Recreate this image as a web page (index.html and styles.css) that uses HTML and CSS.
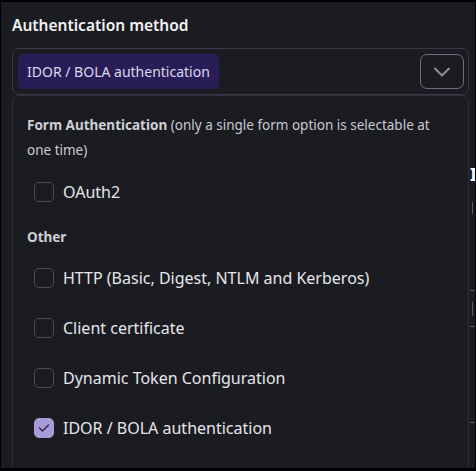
FILE: index.html
```html
<!DOCTYPE html>
<html lang="en">
<head>
  <meta charset="UTF-8" />
  <title>Authentication method</title>
  <link rel="stylesheet" href="styles.css">
</head>
<body>
  <div class="app">
    <!-- content of the page that sits under the open dropdown -->
    <div class="under">
      <span class="under-heading">I</span>
      <span class="under-mark m1"></span>
      <span class="under-mark m2"></span>
      <span class="under-mark m3"></span>
      <span class="under-mark m4"></span>
      <span class="under-mark m5"></span>
      <span class="under-api">API Key</span>
    </div>

    <div class="field">
      <label class="field-label">Authentication method</label>
      <div class="select">
        <span class="chip">IDOR / BOLA authentication</span>
        <button class="toggle" type="button">
          <svg width="18" height="10" viewBox="0 0 18 10">
            <path d="M2 1.5 L9 8.5 L16 1.5" fill="none" stroke="#8d8d9b" stroke-width="2" stroke-linecap="round" stroke-linejoin="round"/>
          </svg>
        </button>
      </div>

      <div class="menu">
        <p class="group-title"><b>Form Authentication</b> (only a single form option is selectable at one time)</p>
        <div class="option first"><span class="box"></span>OAuth2</div>

        <p class="group-title group-other"><b>Other</b></p>
        <div class="option"><span class="box"></span>HTTP (Basic, Digest, NTLM and Kerberos)</div>
        <div class="option"><span class="box"></span>Client certificate</div>
        <div class="option"><span class="box"></span>Dynamic Token Configuration</div>
        <div class="option">
          <span class="box checked">
            <svg width="12" height="10" viewBox="0 0 12 10">
              <path d="M1.5 5 L4.5 8 L10.5 2" fill="none" stroke="#2b2540" stroke-width="1.4" stroke-linecap="round" stroke-linejoin="round"/>
            </svg>
          </span>IDOR / BOLA authentication
        </div>
      </div>
    </div>
  </div>
</body>
</html>
```

FILE: styles.css
```css
html, body {
  margin: 0;
  padding: 0;
  background: #000;
}
body {
  width: 476px;
  height: 471px;
  overflow: hidden;
  font-family: "Noto Sans", "Open Sans", sans-serif;
  color: #e2e2e8;
}
.app {
  position: relative;
  margin: 2px 1px 0 1px;
  height: 466px;
  background: #1b1c21;
  overflow: hidden;
}

/* page behind the dropdown */
.under-heading {
  position: absolute;
  left: 469px;
  top: 160px;
  font-weight: 700;
  font-size: 18px;
  color: #fff;
}
.under-mark {
  position: absolute;
  background: #55566a;
}
.under-mark.m1 { left: 471px; top: 200px; width: 1px; height: 12px; }
.under-mark.m2 { left: 469px; top: 288px; width: 6px; height: 1px; }
.under-mark.m3 { left: 471px; top: 300px; width: 1px; height: 14px; }
.under-mark.m4 { left: 469px; top: 324px; width: 6px; height: 1px; }
.under-mark.m5 { left: 469px; top: 420px; width: 6px; height: 1px; }
.under-api {
  position: absolute;
  left: 323px;
  top: 458px;
  font-weight: 700;
  font-size: 17px;
  color: #fff;
}

.field {
  position: relative;
  padding: 12px 6px 0 11px;
}
.field-label {
  display: block;
  font-weight: 600;
  font-size: 15.5px;
  color: #f1f1f4;
  line-height: 22px;
  margin-bottom: 12px;
}
.select {
  display: flex;
  align-items: center;
  justify-content: space-between;
  height: 35px;
  padding: 5px 4px 5px 5px;
  border: 1px solid #393a48;
  border-radius: 7px;
  background: #1b1c21;
}
.chip {
  display: flex;
  align-items: center;
  height: 35px;
  padding: 0 9px;
  background: #291d58;
  border-radius: 5px;
  font-size: 14px;
  color: #dcd8ec;
}
.toggle {
  width: 44px;
  height: 35px;
  display: flex;
  align-items: center;
  justify-content: center;
  padding: 0;
  background: transparent;
  border: 1px solid #6d6d7c;
  border-radius: 7px;
}

.menu {
  position: absolute;
  left: 11px;
  right: 6px;
  top: 93px;
  height: 366px;
  padding: 17px 14px 0 14px;
  border: 1px solid #2e2f39;
  border-radius: 7px;
  background: #1b1c21;
}
.group-title {
  margin: 0;
  font-size: 13.5px;
  line-height: 25px;
  color: #c9c9d2;
}
.group-title b {
  font-weight: 700;
  color: #cfcfd8;
}
.option {
  display: flex;
  align-items: center;
  gap: 9px;
  height: 50px;
  margin-top: 3px;
  padding-left: 7px;
  font-size: 16px;
  color: #e6e6ec;
}
.option + .option {
  margin-top: 0;
}
.option.first {
  margin-top: 4px;
}
.group-other {
  margin-top: 8px;
}
.box {
  width: 18px;
  height: 18px;
  flex: none;
  display: flex;
  align-items: center;
  justify-content: center;
  border: 1.5px solid #4c4c59;
  border-radius: 5px;
}
.box.checked {
  background: #a99bd8;
  border-color: #a99bd8;
}
```
